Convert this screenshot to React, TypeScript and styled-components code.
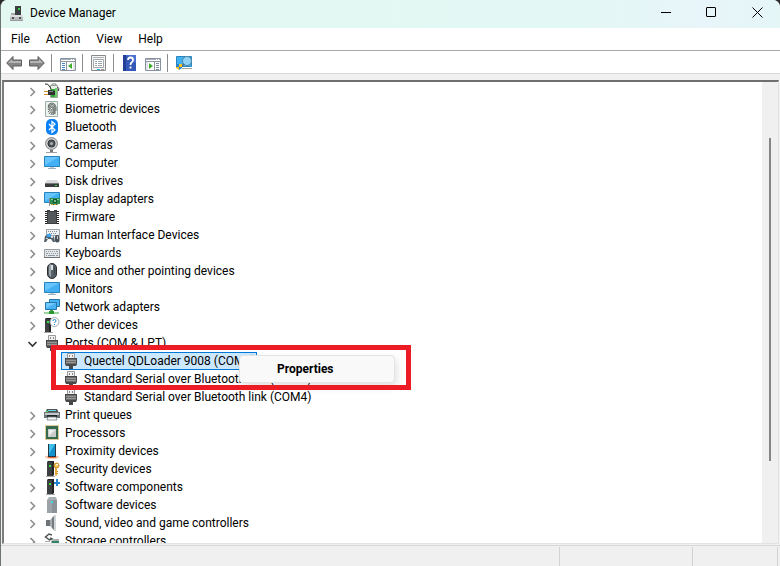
import React from "react";
import styled, { createGlobalStyle } from "styled-components";

const GlobalStyle = createGlobalStyle`
  * { box-sizing: border-box; }
  html, body { margin: 0; padding: 0; }
  body {
    background: #f0f0f0;
    color: #000;
    font: 12px/18px Roboto, "Open Sans", sans-serif;
  }
  button { font: inherit; color: inherit; border: 0; padding: 0; background: none; }
  svg { display: block; }
`;

const Window = styled.div`
  display: flex;
  flex-direction: column;
  height: 100vh;
  overflow: hidden;
  border-left: 1px solid #6e7472;
  border-radius: 7px 7px 0 0;
  background: #f0f0f0;
`;

const Backdrop = styled.div`
  background: #2b2b2b;
`;

const TitleBar = styled.header`
  display: flex;
  align-items: center;
  flex: none;
  height: 28px;
  padding-left: 8px;
  background: linear-gradient(90deg, #e4f8f2 0%, #e3f7f4 75%, #e8f5fa 90%, #e5f6f7 100%);
`;

const Title = styled.h1`
  flex: 1;
  margin: 0 0 2px 5px;
  font-size: 12px;
  font-weight: 400;
`;

const CaptionButton = styled.button`
  display: grid;
  place-items: center;
  width: 46px;
  height: 25px;
  margin-bottom: 3px;
`;

const MenuBar = styled.nav`
  display: flex;
  flex: none;
  gap: 16px;
  height: 23px;
  padding: 2px 10px 0;
  background: #fff;
  border-bottom: 1px solid #a9a9a9;
  line-height: 18px;
`;

const MenuItem = styled.button`
  height: 18px;
`;

const ToolBar = styled.div`
  display: flex;
  align-items: center;
  flex: none;
  height: 23px;
  padding: 2px 5px 0;
  background: #fff;
  border-bottom: 1px solid #dadada;
`;

const ToolButton = styled.button`
  width: 16px;
  height: 16px;
  & + & { margin-left: 7px; }
`;

const Separator = styled.span`
  width: 1px;
  height: 18px;
  margin: 0 8px 0 6px;
  background: #8c8c8c;
`;

const Pane = styled.main`
  display: flex;
  flex: 1;
  min-height: 0;
  margin: 6px 1px 1px 1px;
  border: 1px solid #e3e3e3;
  border-top: 2px solid #6f6f6f;
  border-left: 2px solid #7d7d7d;
  background: #fff;
`;

const TreeView = styled.div`
  position: relative;
  flex: 1;
  overflow: hidden;
`;

const List = styled.ul`
  margin: 0;
  padding: 0;
  list-style: none;
`;

const Row = styled.div<{ $child?: boolean }>`
  display: flex;
  align-items: center;
  height: 18px;
  padding-left: ${(p) => (p.$child ? "57px" : "23px")};
`;

const Expander = styled.button`
  display: grid;
  place-items: center;
  width: 11px;
  height: 16px;
  margin-right: 6px;
`;

const Label = styled.span`
  margin-left: 5px;
  white-space: nowrap;
`;

const Entry = styled.span<{ $selected?: boolean }>`
  display: flex;
  align-items: center;
  height: 18px;
  padding: 0 1px;
  border: 1px solid ${(p) => (p.$selected ? "#0078d7" : "transparent")};
  background: ${(p) => (p.$selected ? "#cce8ff" : "transparent")};
`;

const ScrollTrack = styled.div`
  flex: none;
  width: 16px;
  padding: 56px 7px 82px;
  background: #f0f0f0;
`;

const ScrollThumb = styled.div`
  width: 2px;
  height: 100%;
  background: #858585;
`;

const Highlight = styled.div`
  position: absolute;
  left: 47px;
  top: 263px;
  width: 360px;
  height: 45px;
  border: 5px solid #ed1c24;
  pointer-events: none;
`;

const ContextMenu = styled.div`
  position: absolute;
  left: 235px;
  top: 273px;
  width: 156px;
  padding: 4px 0;
  border: 1px solid #e4e4e4;
  border-radius: 4px;
  background: #f9f9f9;
  box-shadow: 2px 4px 8px rgba(0, 0, 0, 0.12);
`;

const ContextItem = styled.button`
  display: block;
  width: 100%;
  padding-left: 37px;
  text-align: left;
  font-weight: 700;
  line-height: 18px;
`;

const StatusBar = styled.footer`
  display: grid;
  grid-template-columns: 1fr 133px 85px 2px;
  flex: none;
  height: 21px;
  padding-top: 1px;
  border-top: 1px solid #d7d7d7;
`;

const StatusCell = styled.div`
  border-right: 1px solid #d2d2d2;
`;

const Icon = ({ children }: { children: React.ReactNode }) => (
  <svg width="16" height="16" viewBox="0 0 16 16" aria-hidden="true">
    {children}
  </svg>
);

const Tower = () => (
  <>
    <path d="M3 1l1-1h6v14l-1 1H3z" fill="#222426" />
    <path d="M3 1h5v14H3z" fill="#3d4042" />
    <path d="M2 15h9v1H2z" fill="#a6a6a6" />
    <path d="M5 4h2v2H5z" fill="#35e03c" />
  </>
);

const Plug = () => (
  <>
    <path d="M4.500 0.500h7v5h-7z" fill="#f1f1f1" stroke="#9a9a9a" />
    <path d="M6 2h1v2H6zM9 2h1v2H9z" fill="#8a8a8a" />
    <path d="M2 5h12v6l-1 2h-3v3H6v-3H3l-1-2z" fill="#484848" />
    <path d="M3 6h10v5H3z" fill="#6c6c6c" />
    <path d="M3 7h10v1H3zM3 9h10v1H3z" fill="#969696" />
  </>
);

const Screen = () => (
  <>
    <path d="M0.500 1.500h15v10h-15z" fill="#41b0f5" stroke="#2783bd" />
    <path d="M1 2h14L1 10z" fill="#68c5fb" />
    <path d="M6 12h4v1H6z" fill="#c3d0d8" />
    <path d="M4 13h8v1H4z" fill="#9ab0bd" />
  </>
);

const icons: Record<string, React.ReactNode> = {
  battery: (
    <>
      <path d="M8 2V1h4v1" fill="none" stroke="#7c8580" />
      <path d="M6.500 2.500h7v12h-7z" fill="#e7efe8" stroke="#9aa59c" />
      <path d="M7 6h6v8H7z" fill="#2fa83b" />
      <path d="M11 5h2v9h-2z" fill="#70ce6e" />
      <path d="M13.500 4q2 1 1 4" fill="none" stroke="#33302d" />
      <path d="M1 1q3-1 5 3l1 2" fill="none" stroke="#2a2a2a" />
      <path d="M4 7h3l4 1v4H7l-3 0z" fill="#2f302f" />
      <path d="M5 8h4v1H5z" fill="#8a8c8a" />
      <path d="M0 8h4v1H0zM0 11h4v1H0z" fill="#d19225" />
    </>
  ),
  finger: (
    <>
      <path d="M1.500 0.500h12v15h-12z" fill="#eef3f0" stroke="#9fb2a8" />
      <g fill="none" stroke="#3e4643" strokeWidth="0.800">
        <path d="M4 5q1-3 4-3t4 4v4M4 7q0-3.500 4-3.500 3 0 3 3.500v6M4 9l1-1.500q0-2.500 2.500-2.500T10 8v5.500M4 11q2-1 2-3 0-1.500 1.500-1.500T9 8v6M5 13q2.500-2 2.500-5M7 14q1-2 1-3" />
      </g>
    </>
  ),
  bluetooth: (
    <>
      <rect x="2" y="0" width="12" height="16" rx="5" fill="#0a80f5" />
      <path d="M5 5l6 6-3 2.500v-11L11 5l-6 6" fill="none" stroke="#fff" strokeWidth="1.200" />
    </>
  ),
  camera: (
    <>
      <circle cx="7.500" cy="6.500" r="6" fill="#c6cacc" stroke="#85898b" />
      <circle cx="7.500" cy="6.500" r="3.500" fill="#55595c" stroke="#2d3032" />
      <circle cx="7.500" cy="6.500" r="1.500" fill="#a2adb3" />
      <path d="M6 13h3v2H6z" fill="#777" />
      <path d="M2 15h11v1H2z" fill="#a0a0a0" />
    </>
  ),
  screen: <Screen />,
  disk: (
    <>
      <path d="M3 7h10l2 3H1z" fill="#d9dadb" />
      <path d="M1 10h14v4H1z" fill="#3a3c3e" />
      <path d="M1 10h14v1H1z" fill="#77797b" />
      <path d="M11 12h2v1h-2z" fill="#38df42" />
    </>
  ),
  display: (
    <>
      <path d="M0.500 1.500h15v10h-15z" fill="#41b0f5" stroke="#2783bd" />
      <path d="M1 2h14L1 10z" fill="#68c5fb" />
      <path d="M5 7h1v8H5z" fill="#868b87" />
      <path d="M6 7h10v6H6z" fill="#2b8c4f" />
      <path d="M7 8h2v1H7zM13 8h2v1h-2z" fill="#8bd19d" />
      <path d="M9 8h4v4H9z" fill="#175633" />
      <path d="M10 9h2v2h-2z" fill="#78b98c" />
      <path d="M7 13h7v1H7z" fill="#d1a33a" />
      <path d="M9 13h1v1H9zM12 13h1v1h-1z" fill="#236c40" />
    </>
  ),
  chip: (
    <>
      <path d="M3 1h3v1h4V1h3v14H3z" fill="#3c3f41" />
      <path d="M1 2h2v1H1zM1 4h2v1H1zM1 6h2v1H1zM1 8h2v1H1zM1 10h2v1H1zM1 12h2v1H1zM1 14h2v1H1zM13 2h2v1h-2zM13 4h2v1h-2zM13 6h2v1h-2zM13 8h2v1h-2zM13 10h2v1h-2zM13 12h2v1h-2zM13 14h2v1h-2z" fill="#222" />
      <path d="M4 3h8v11H4z" fill="#54585a" />
    </>
  ),
  hid: (
    <>
      <path d="M2.500 2.500h13v6h-13z" fill="#edf1f3" stroke="#9ca4a9" />
      <path d="M4 4h1v1H4zM6 4h1v1H6zM8 4h1v1H8zM10 4h1v1h-1zM12 4h1v1h-1zM5 6h1v1H5zM7 6h1v1H7zM9 6h1v1H9zM11 6h1v1h-1z" fill="#858d92" />
      <path d="M1 9q3-2 5 0t4 0l1 6H9l-2-3H4l-2 3H0z" fill="#53616d" />
      <path d="M3 7h4v3H3z" fill="#38a7ef" />
      <path d="M2 11h2v1H2zM7 10h2v1H7z" fill="#cbd4da" />
      <rect x="11" y="8" width="4.500" height="7.500" rx="2" fill="#4b5359" />
      <path d="M13 9h1v3h-1z" fill="#bcc5cb" />
    </>
  ),
  keyboard: (
    <>
      <path d="M0.500 4.500h15v8h-15z" fill="#e5e8ea" stroke="#969da2" />
      <path d="M0 12h16v1H0z" fill="#6b7175" />
      <path d="M2 6h1v1H2zM4 6h1v1H4zM6 6h1v1H6zM8 6h1v1H8zM10 6h1v1h-1zM12 6h2v1h-2zM2 8h2v1H2zM5 8h1v1H5zM7 8h1v1H7zM9 8h1v1H9zM11 8h1v1h-1zM13 8h1v1h-1zM2 10h1v1H2zM4 10h7v1H4zM12 10h2v1h-2z" fill="#9199a0" />
    </>
  ),
  mouse: (
    <>
      <rect x="3.500" y="0.500" width="9" height="15" rx="4.500" fill="#596168" stroke="#282c30" />
      <path d="M5 4q0-3 2-3v13q-2-1-2-3z" fill="#9aa4ac" />
      <path d="M7 2h2v5H7z" fill="#dbe1e5" />
      <path d="M10 3q2 2 1 8l-1 2z" fill="#3d444a" />
    </>
  ),
  network: (
    <>
      <path d="M5.500 0.500h10v7h-10z" fill="#48b2f2" stroke="#2177ad" />
      <path d="M1.500 3.500h11v7h-11z" fill="#48b2f2" stroke="#2177ad" />
      <path d="M2 4h10L2 9z" fill="#74cafa" />
      <path d="M6 11h3v2H6z" fill="#47a94d" />
      <path d="M0 13h15v2H0z" fill="#9bd49d" />
      <path d="M5 12h5v3H5z" fill="#2b9638" />
    </>
  ),
  other: (
    <>
      <path d="M1 2l1-1h5v14l-1 1H1z" fill="#222426" />
      <path d="M1 2h4v13H1z" fill="#3d4042" />
      <path d="M0 15h9v1H0z" fill="#a6a6a6" />
      <path d="M3 4h2v2H3z" fill="#35e03c" />
      <circle cx="10.500" cy="5" r="4.500" fill="#fff" stroke="#9daab4" />
      <path d="M9 4q0-1.500 1.500-1.500T12 4q0 .8-1.500 1.500V6M10.500 7v1" fill="none" stroke="#1680c4" />
    </>
  ),
  plug: <Plug />,
  printer: (
    <>
      <path d="M3 2h10l2 4H1z" fill="#4d5457" />
      <path d="M4 3h8v1H4z" fill="#62dce0" />
      <path d="M0 5h16v6H0z" fill="#6c7478" />
      <path d="M1 6h14v2H1z" fill="#c2c8cb" />
      <path d="M3 8h10v2H3z" fill="#22272a" />
      <path d="M4 10h8l1 3H3z" fill="#f4f6f7" stroke="#777f83" strokeWidth="0.800" />
      <path d="M2 4h2v1H2z" fill="#3de551" />
    </>
  ),
  cpu: (
    <>
      <path d="M1.500 0.500h13v14h-13z" fill="none" stroke="#b99836" strokeDasharray="1 1" />
      <path d="M2 1h12v13H2z" fill="#356a4d" />
      <path d="M4 4h8v8H4z" fill="#c9cccb" />
      <path d="M5 5h6l-6 6z" fill="#eceeed" />
    </>
  ),
  proximity: (
    <>
      <ellipse cx="8" cy="14" rx="7" ry="1.800" fill="#f8c4a8" />
      <ellipse cx="8" cy="14" rx="4.500" ry="1" fill="#e46c35" />
      <path d="M4 1h8v13H4z" fill="#263541" />
      <path d="M5 1h6v12H5z" fill="#1591d0" />
      <path d="M5 1h6L5 11z" fill="#3fc0e8" />
    </>
  ),
  security: (
    <>
      <Tower />
      <circle cx="12.500" cy="4.500" r="2.500" fill="#f5c65c" stroke="#bd861d" />
      <path d="M11 7h2v7l-1 1-1-1z" fill="#e4a93a" />
      <path d="M13 10h1v1h-1zM13 12h1v1h-1z" fill="#bd861d" />
      <path d="M12 3h2v1h-2z" fill="#fff" />
    </>
  ),
  component: (
    <>
      <Tower />
      <path d="M12 0h2v3h2v2h-2v2h-2V5h-2V3h2z" fill="#2384d1" />
    </>
  ),
  software: (
    <>
      <path d="M3 3l2-3h7l1 3v12H3z" fill="#a9b0b4" />
      <path d="M3 3h10v13H3z" fill="#8b9398" />
      <path d="M3 3h5v13H3z" fill="#9ba3a8" />
      <path d="M7 4h2v2H7z" fill="#36dce6" />
    </>
  ),
  sound: (
    <>
      <path d="M2 5h4v6H2z" fill="#6d7377" />
      <path d="M6 5l4-4v14l-4-4z" fill="#a6adb1" />
      <path d="M8 3l3-3v16l-3-3z" fill="#767d82" />
      <path d="M10 0h2v16h-2z" fill="#cfd4d6" />
    </>
  ),
  storage: (
    <>
      <path d="M8 2L5 1 1.500 4l4 3L8 6 6 5" fill="none" stroke="#4e5552" strokeWidth="1.500" />
      <path d="M1 8h5v1H1z" fill="#aaa" />
      <path d="M7 8l3-2h5v8H7z" fill="#a9b0b0" />
      <path d="M8 8h7v2H8z" fill="#338461" />
    </>
  ),
};

const ArrowLeft = () => (
  <Icon>
    <path d="M0.700 8L7 1.500v3.500h8.500v6H7v3.500z" fill="#858585" stroke="#5d5d5d" />
    <path d="M2 8l4-4v2h9v2z" fill="#b4b4b4" />
  </Icon>
);

const ArrowRight = () => (
  <Icon>
    <path d="M15.300 8L9 1.500v3.500H0.500v6H9v3.500z" fill="#858585" stroke="#5d5d5d" />
    <path d="M14 8l-4-4v2H1v2z" fill="#b4b4b4" />
  </Icon>
);

const PaneFrame = () => (
  <>
    <path d="M0.500 3.500h15v12h-15z" fill="#fff" stroke="#8791a0" />
    <path d="M1 4h14v1H1z" fill="#a4adb8" />
    <path d="M11 4h1v1h-1zM13 4h1v1h-1z" fill="#fff" />
    <path d="M1 6h14v1H1z" fill="#8d969f" />
  </>
);

const ConsoleTree = () => (
  <Icon>
    <PaneFrame />
    <path d="M2 8h3v1H2zM2 10h3v1H2zM2 12h3v1H2zM2 14h3v1H2z" fill="#4a83c6" />
    <path d="M6 7h1v8H6z" fill="#8d969f" />
    <path d="M13 7h2v8h-2z" fill="#e0e4e8" />
    <path d="M8 11l4-3v6z" fill="#3eae2c" />
  </Icon>
);

const ActionPane = () => (
  <Icon>
    <PaneFrame />
    <path d="M11 8h3v1h-3zM11 10h3v1h-3zM11 12h3v1h-3zM11 14h3v1h-3z" fill="#7a8ea6" />
    <path d="M9 7h1v8H9z" fill="#8d969f" />
    <path d="M1 7h2v8H1z" fill="#e0e4e8" />
    <path d="M8 11L4 8v6z" fill="#3eae2c" />
  </Icon>
);

const PropertySheet = () => (
  <Icon>
    <path d="M0.500 0.500h14v15h-14z" fill="#f4f4f4" stroke="#8b8b8b" />
    <path d="M2 2h11v1H2z" fill="#b2b2b2" />
    <path d="M2.500 4.500h10v8h-10z" fill="#fff" stroke="#a3a8ac" />
    <path d="M4 6h2v1H4zM7 6h4v1H7zM4 8h2v1H4zM7 8h4v1H7zM4 10h2v1H4zM7 10h4v1H7z" fill="#9ba3aa" />
    <path d="M6 14h3v1H6z" fill="#26bce8" />
    <path d="M10 14h3v1h-3z" fill="#9a9a9a" />
  </Icon>
);

const HelpBook = () => (
  <Icon>
    <path d="M1 0h13v16H1z" fill="#3658b8" />
    <path d="M1 0h3v16H1z" fill="#233f98" />
    <path d="M4 0h10v8z" fill="#4c71cf" />
    <path d="M6 5q0-2.500 2.500-2.500T11 5q0 1.500-1.500 2.500-1 .7-1 2.500M8.500 11.500v2" fill="none" stroke="#fff" strokeWidth="1.800" />
  </Icon>
);

const ScanHardware = () => (
  <Icon>
    <path d="M0.500 1.500h15v10h-15z" fill="#3fb0f0" stroke="#2b86bd" />
    <path d="M6 13h10v1H6z" fill="#a8a8a8" />
    <circle cx="11" cy="6" r="4.500" fill="#8fd2f5" stroke="#4f87a6" />
    <path d="M8 9l-3 3" stroke="#5d6a72" strokeWidth="1.500" />
    <path d="M0 9h3v3H0z" fill="#2a7fd1" />
    <path d="M3 9h3v3H3z" fill="#f8c51c" />
    <path d="M0 12h3v3l-3-2z" fill="#f8c51c" />
    <path d="M3 12h3v1l-3 2z" fill="#2a7fd1" />
  </Icon>
);

const AppIcon = () => (
  <Icon>
    <path d="M6 0h6v9H6z" fill="#3c3f40" />
    <path d="M9 2h2v2H9z" fill="#39d447" />
    <path d="M1 9h13v5H1z" fill="#b9bbbd" />
    <path d="M1 9h13v2H1z" fill="#dcddde" />
    <path d="M3 11h2v2H3zM10 11h2v2h-2z" fill="#4e5254" />
    <path d="M1 14h13v1H1z" fill="#97999b" />
    <path d="M2 7h4v2H2z" fill="#a9abad" />
  </Icon>
);

const Chevron = ({ open }: { open?: boolean }) => (
  <svg width="11" height="11" viewBox="0 0 11 11" aria-hidden="true">
    {open ? (
      <path d="M1.500 4L5.500 8l4-4" fill="none" stroke="#333" strokeWidth="1.600" />
    ) : (
      <path d="M3.500 2L7.500 6l-4 4" fill="none" stroke="#8e8e8e" strokeWidth="1.600" />
    )}
  </svg>
);

type Device = { name: string; icon: string; ports?: string[] };

const devices: Device[] = [
  { name: "Batteries", icon: "battery" },
  { name: "Biometric devices", icon: "finger" },
  { name: "Bluetooth", icon: "bluetooth" },
  { name: "Cameras", icon: "camera" },
  { name: "Computer", icon: "screen" },
  { name: "Disk drives", icon: "disk" },
  { name: "Display adapters", icon: "display" },
  { name: "Firmware", icon: "chip" },
  { name: "Human Interface Devices", icon: "hid" },
  { name: "Keyboards", icon: "keyboard" },
  { name: "Mice and other pointing devices", icon: "mouse" },
  { name: "Monitors", icon: "screen" },
  { name: "Network adapters", icon: "network" },
  { name: "Other devices", icon: "other" },
  {
    name: "Ports (COM & LPT)",
    icon: "plug",
    ports: [
      "Quectel QDLoader 9008 (COM7)",
      "Standard Serial over Bluetooth link (COM3)",
      "Standard Serial over Bluetooth link (COM4)",
    ],
  },
  { name: "Print queues", icon: "printer" },
  { name: "Processors", icon: "cpu" },
  { name: "Proximity devices", icon: "proximity" },
  { name: "Security devices", icon: "security" },
  { name: "Software components", icon: "component" },
  { name: "Software devices", icon: "software" },
  { name: "Sound, video and game controllers", icon: "sound" },
  { name: "Storage controllers", icon: "storage" },
];

export default function App() {
  return (
    <Backdrop>
      <GlobalStyle />
      <Window>
        <TitleBar>
          <AppIcon />
          <Title>Device Manager</Title>
          <CaptionButton aria-label="Minimize">
            <svg width="11" height="11" viewBox="0 0 11 11">
              <path d="M1 5.500h10" stroke="#000" />
            </svg>
          </CaptionButton>
          <CaptionButton aria-label="Maximize">
            <svg width="11" height="11" viewBox="0 0 11 11">
              <rect x="0.500" y="0.500" width="9" height="9" rx="0.500" fill="none" stroke="#000" />
            </svg>
          </CaptionButton>
          <CaptionButton aria-label="Close">
            <svg width="11" height="11" viewBox="0 0 11 11">
              <path d="M0.500 0.500l10 10M10.500 0.500l-10 10" stroke="#000" />
            </svg>
          </CaptionButton>
        </TitleBar>
        <MenuBar>
          {["File", "Action", "View", "Help"].map((m) => (
            <MenuItem key={m}>{m}</MenuItem>
          ))}
        </MenuBar>
        <ToolBar role="toolbar">
          <ToolButton aria-label="Back"><ArrowLeft /></ToolButton>
          <ToolButton aria-label="Forward"><ArrowRight /></ToolButton>
          <Separator />
          <ToolButton aria-label="Show or hide console tree"><ConsoleTree /></ToolButton>
          <Separator />
          <ToolButton aria-label="Properties"><PropertySheet /></ToolButton>
          <Separator />
          <ToolButton aria-label="Help"><HelpBook /></ToolButton>
          <ToolButton aria-label="Show or hide action pane"><ActionPane /></ToolButton>
          <Separator />
          <ToolButton aria-label="Scan for hardware changes"><ScanHardware /></ToolButton>
        </ToolBar>
        <Pane>
          <TreeView>
            <List role="tree">
              {devices.map((d) => (
                <li key={d.name} role="treeitem" aria-expanded={!!d.ports}>
                  <Row>
                    <Expander aria-label={`Toggle ${d.name}`}>
                      <Chevron open={!!d.ports} />
                    </Expander>
                    <Icon>{icons[d.icon]}</Icon>
                    <Label>{d.name}</Label>
                  </Row>
                  {d.ports && (
                    <List role="group">
                      {d.ports.map((p, i) => (
                        <li key={p} role="treeitem" aria-selected={i === 0}>
                          <Row $child>
                            <Entry $selected={i === 0}>
                              <Icon>{icons.plug}</Icon>
                              <Label>{p}</Label>
                            </Entry>
                          </Row>
                        </li>
                      ))}
                    </List>
                  )}
                </li>
              ))}
            </List>
            <ContextMenu role="menu">
              <ContextItem role="menuitem">Properties</ContextItem>
            </ContextMenu>
            <Highlight />
          </TreeView>
          <ScrollTrack>
            <ScrollThumb />
          </ScrollTrack>
        </Pane>
        <StatusBar>
          <StatusCell />
          <StatusCell />
          <StatusCell />
        </StatusBar>
      </Window>
    </Backdrop>
  );
}
